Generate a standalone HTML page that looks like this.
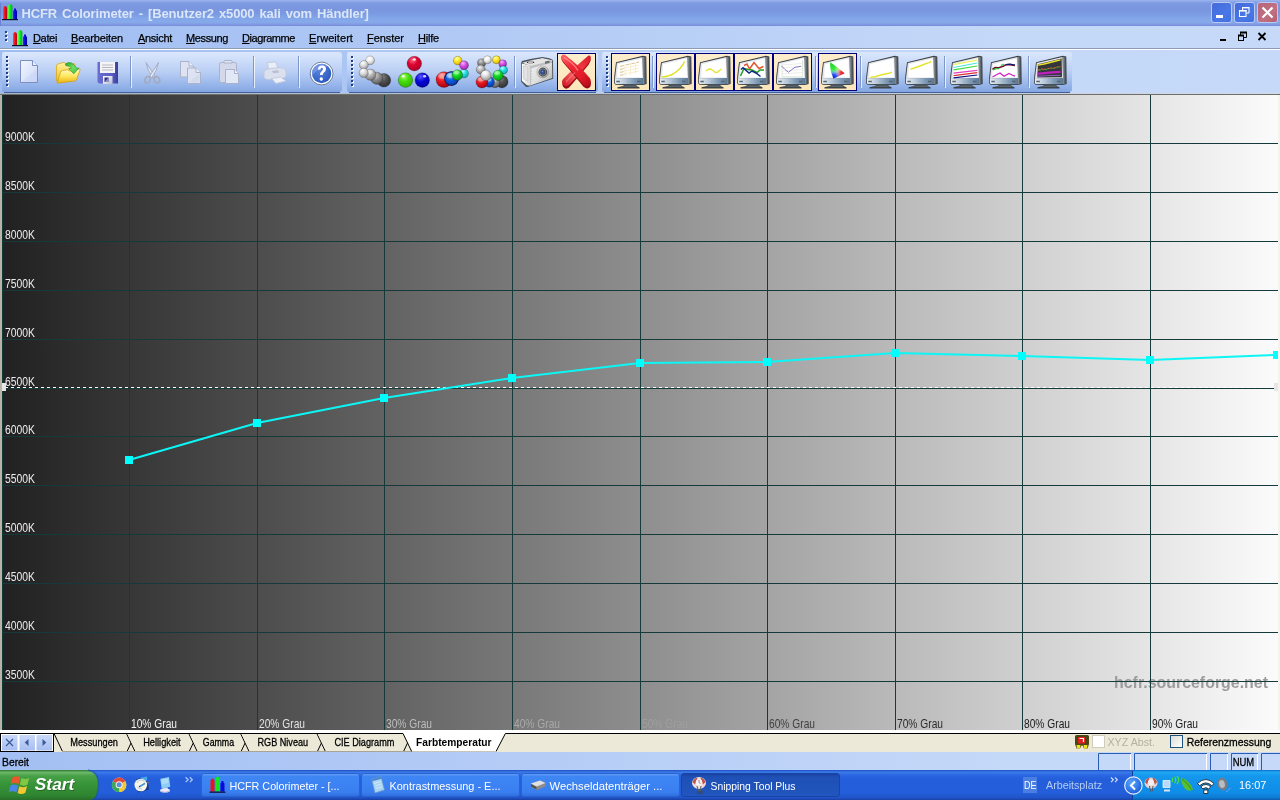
<!DOCTYPE html>
<html>
<head>
<meta charset="utf-8">
<title>HCFR Colorimeter</title>
<style>
html,body{margin:0;padding:0;}
body{width:1280px;height:800px;overflow:hidden;position:relative;background:#c3d7f7;font-family:"Liberation Sans",sans-serif;font-size:11px;color:#000;}
.a{position:absolute;}
svg.a,#title,#menu{will-change:transform;}
.t{position:absolute;white-space:nowrap;line-height:1;}
/* title bar */
#title{left:0;top:0;width:1280px;height:26px;background:linear-gradient(to bottom,#a0b7ed 0px,#8ca7e7 1.5px,#7c99e1 3.5px,#7996df 10px,#7b9be2 14px,#82a5e8 18px,#86aaea 22px,#829fe5 24px,#7a8fdc 25.5px,#7a8fdc 26px);}
#title .txt{left:21.5px;top:7px;font-size:13px;font-weight:bold;color:#dbe6f9;letter-spacing:0.1px;}
.tb{position:absolute;top:2px;width:21px;height:21px;border-radius:3px;box-sizing:border-box;border:1px solid #b9c9f3;}
/* menu */
#menu{left:0;top:26px;width:1280px;height:22px;background:linear-gradient(to right,#a0bdf2 0,#c4d8f8 1000px,#c6d9f8 1280px);}
#menu .t{top:7px;font-size:11px;-webkit-text-stroke:.25px #000;}
#menu u{text-decoration:underline;text-decoration-thickness:1px;text-underline-offset:0.5px;}
/* toolbars */
#dock{left:0;top:50px;width:1280px;height:43px;background:linear-gradient(to right,#a0bdf2 0,#c4d8f8 1000px,#c6d9f8 1280px);}
.bar{position:absolute;top:52px;height:40px;border-radius:2px 3px 3px 2px;background:linear-gradient(to bottom,#dbe7fc 0,#d1e0fa 15%,#b9cef4 50%,#94b3ea 85%,#85a5e1 100%);}
.sep{position:absolute;top:56px;width:1px;height:31px;background:#7f98cc;box-shadow:1px 1px 0 rgba(255,255,255,.75);}
.sel{position:absolute;top:53px;width:39px;height:38px;box-sizing:border-box;border:1px solid #00007a;background:linear-gradient(to bottom,#fdedcb,#fce6bb);}
.bar:after{content:"";position:absolute;left:2px;right:2px;bottom:-1px;height:1px;background:#42609a;}
/* chart */
#chart{left:2px;top:95px;width:1276px;height:635px;}
.yl{font-size:12.5px;fill:#ececec;font-family:"Liberation Sans",sans-serif;}
.xl{font-size:12.5px;font-family:"Liberation Sans",sans-serif;}
.wm{font-size:16px;font-weight:bold;fill:#9c9c9c;font-family:"Liberation Sans",sans-serif;}
.tt{font-size:11px;font-family:"Liberation Sans",sans-serif;}
.tk{stroke:#000;stroke-width:.3px;}
/* tabs */
#tabs{left:0;top:733px;width:1280px;height:19px;background:#ece9d8;}
#status{left:0;top:752px;width:1280px;height:18px;background:linear-gradient(to right,#a3bff3 0,#c4d8f8 1000px,#c6d9f8 1280px);}
.pane{position:absolute;top:755px;height:15px;box-sizing:border-box;border:1px solid #7d9ad6;border-right-color:#fff;border-bottom-color:#fff;}
/* taskbar */
#task{left:0;top:770px;width:1280px;height:30px;background:linear-gradient(to bottom,#1f52c7 0,#3a7bea 2px,#2a66e0 5px,#245edb 9px,#245edb 22px,#2055ca 27px,#1941a5 30px);}
.tbtn{position:absolute;top:773px;width:157px;height:24px;border-radius:3px;background:linear-gradient(to bottom,#5a95f5 0,#3c81f3 3px,#3b80f2 18px,#2f6fe0 24px);box-shadow:inset 1px 1px 0 #6ea4f8, inset -1px -1px 0 #2a5fc8;}
.tbtn.on{background:linear-gradient(to bottom,#173b9a 0,#1e52b7 3px,#1f54b9 20px,#2258bf 24px);box-shadow:inset 1px 1px 1px #12307e;}
.tbtn .t{left:28px;top:6px;color:#fff;font-size:11px;}
</style>
</head>
<body>
<!-- TITLE -->
<div id="title" class="a">
  <div class="a" style="left:0;top:3px;width:1px;height:23px;background:#6c7fd3"></div>
  <div class="t txt" id="ttxt" style="letter-spacing:-0.12px;word-spacing:1.5px;">HCFR Colorimeter - [Benutzer2 x5000 kali vom Händler]</div>
<svg class="a" style="left:2px;top:4px" width="18" height="18" viewBox="0 0 18 18"><defs><linearGradient id="ar" x1="0" x2="1"><stop offset="0" stop-color="#ff5040"/><stop offset=".45" stop-color="#f01018"/><stop offset="1" stop-color="#b00010"/></linearGradient><linearGradient id="ag" x1="0" x2="1"><stop offset="0" stop-color="#60ff60"/><stop offset=".45" stop-color="#10e820"/><stop offset="1" stop-color="#08a818"/></linearGradient><linearGradient id="ab" x1="0" x2="1"><stop offset="0" stop-color="#3030ff"/><stop offset=".45" stop-color="#0808e0"/><stop offset="1" stop-color="#0000a0"/></linearGradient></defs><path d="M1 15.500V4.500Q1 2 3 2Q5 2 5 4.500V15.500Z" fill="url(#ar)"/><path d="M6 15.500V2.500Q6 0 8.200 0Q10.400 0 10.400 2.500V15.500Z" fill="url(#ag)"/><path d="M11 15.500V7L12 6V4.500h2V6l1 1V15.500Z" fill="url(#ab)"/><rect x="0" y="15" width="16" height="1.200" fill="#101030"/></svg>
  <div class="tb" style="left:1211px;background:linear-gradient(135deg,#4568d8,#4a78e6 60%,#3f70e0)"><div class="a" style="left:4px;top:12px;width:7px;height:3px;background:#fff"></div></div>
  <div class="tb" style="left:1234px;background:linear-gradient(135deg,#4568d8,#4a78e6 60%,#3f70e0)"><svg class="a" style="left:0;top:0" width="19" height="19" viewBox="0 0 19 19"><path d="M7.5 7V4.500h6.500v5.500h-3" fill="none" stroke="#fff" stroke-width="1"/><path d="M7 4.700h7.500" stroke="#fff" stroke-width="1.400"/><rect x="4.500" y="7.500" width="6.500" height="6" fill="none" stroke="#fff" stroke-width="1"/><path d="M4 7.800h7.500" stroke="#fff" stroke-width="1.600"/></svg></div>
  <div class="tb" style="left:1257px;background:linear-gradient(135deg,#b8667c,#c07080 60%,#b4606f)"><svg class="a" style="left:0;top:0" width="19" height="19" viewBox="0 0 19 19"><path d="M4.5 4.5l10 10M14.5 4.5l-10 10" stroke="#fff" stroke-width="2.2" stroke-linecap="butt"/></svg></div>
</div>
<!-- MENU -->
<div id="menu" class="a">
<div class="a" style="left:5px;top:5px;width:2px;height:2px;background:#27408b;box-shadow:1px 1px 0 #fff,0 4px 0 #27408b,1px 5px 0 #fff,0 8px 0 #27408b,1px 9px 0 #fff"></div>
<svg class="a" style="left:12px;top:4px" width="18" height="18" viewBox="0 0 18 18"><defs><linearGradient id="br" x1="0" x2="1"><stop offset="0" stop-color="#ff5040"/><stop offset=".45" stop-color="#f01018"/><stop offset="1" stop-color="#b00010"/></linearGradient><linearGradient id="bg" x1="0" x2="1"><stop offset="0" stop-color="#60ff60"/><stop offset=".45" stop-color="#10e820"/><stop offset="1" stop-color="#08a818"/></linearGradient><linearGradient id="bb" x1="0" x2="1"><stop offset="0" stop-color="#3030ff"/><stop offset=".45" stop-color="#0808e0"/><stop offset="1" stop-color="#0000a0"/></linearGradient></defs><path d="M1 15.500V4.500Q1 2 3 2Q5 2 5 4.500V15.500Z" fill="url(#br)"/><path d="M6 15.500V2.500Q6 0 8.200 0Q10.400 0 10.400 2.500V15.500Z" fill="url(#bg)"/><path d="M11 15.500V7L12 6V4.500h2V6l1 1V15.500Z" fill="url(#bb)"/><rect x="0" y="15" width="16" height="1.200" fill="#101030"/></svg>
<div class="t" id="m0" style="letter-spacing:-0.341px;left:33px"><u>D</u>atei</div>
<div class="t" id="m1" style="letter-spacing:-0.122px;left:71px"><u>B</u>earbeiten</div>
<div class="t" id="m2" style="letter-spacing:-0.299px;left:138px"><u>A</u>nsicht</div>
<div class="t" id="m3" style="letter-spacing:-0.379px;left:186px"><u>M</u>essung</div>
<div class="t" id="m4" style="letter-spacing:-0.429px;left:242px"><u>D</u>iagramme</div>
<div class="t" id="m5" style="letter-spacing:0.066px;left:309px"><u>E</u>rweitert</div>
<div class="t" id="m6" style="letter-spacing:-0.045px;left:367px"><u>F</u>enster</div>
<div class="t" id="m7" style="letter-spacing:-0.203px;left:418px"><u>H</u>ilfe</div>
<div class="a" style="left:1220px;top:13px;width:6px;height:2px;background:#000"></div>
<svg class="a" style="left:1236px;top:5px" width="12" height="12" viewBox="0 0 12 12"><path d="M4.5 4V1.5h6v5H8" fill="none" stroke="#000"/><path d="M4 1.5h7" stroke="#000" stroke-width="2"/><rect x="2.5" y="4.5" width="5" height="5" fill="none" stroke="#000"/><path d="M2 4.5h6" stroke="#000" stroke-width="2"/></svg>
<svg class="a" style="left:1257px;top:6px" width="10" height="9" viewBox="0 0 10 9"><path d="M1.5 1l7 7M8.5 1l-7 7" stroke="#000" stroke-width="1.8"/></svg>
</div>
<div class="a" style="left:0;top:48px;width:1280px;height:1px;background:#8e9bb5"></div>
<div class="a" style="left:0;top:49px;width:1280px;height:1px;background:#ffffff"></div>
<!-- TOOLBARS -->
<div id="dock" class="a"></div>
<div class="bar" style="left:2px;width:340px"><svg class="a" style="left:4px;top:4px" width="3" height="32" viewBox="0 0 3 32"><rect x="1" y="1" width="2" height="2" fill="#fff"/><rect x="0" y="0" width="2" height="2" fill="#1c3e8c"/><rect x="1" y="5" width="2" height="2" fill="#fff"/><rect x="0" y="4" width="2" height="2" fill="#1c3e8c"/><rect x="1" y="9" width="2" height="2" fill="#fff"/><rect x="0" y="8" width="2" height="2" fill="#1c3e8c"/><rect x="1" y="13" width="2" height="2" fill="#fff"/><rect x="0" y="12" width="2" height="2" fill="#1c3e8c"/><rect x="1" y="17" width="2" height="2" fill="#fff"/><rect x="0" y="16" width="2" height="2" fill="#1c3e8c"/><rect x="1" y="21" width="2" height="2" fill="#fff"/><rect x="0" y="20" width="2" height="2" fill="#1c3e8c"/><rect x="1" y="25" width="2" height="2" fill="#fff"/><rect x="0" y="24" width="2" height="2" fill="#1c3e8c"/><rect x="1" y="29" width="2" height="2" fill="#fff"/><rect x="0" y="28" width="2" height="2" fill="#1c3e8c"/></svg></div>
<div class="bar" style="left:347px;width:251px"><svg class="a" style="left:4px;top:4px" width="3" height="32" viewBox="0 0 3 32"><rect x="1" y="1" width="2" height="2" fill="#fff"/><rect x="0" y="0" width="2" height="2" fill="#1c3e8c"/><rect x="1" y="5" width="2" height="2" fill="#fff"/><rect x="0" y="4" width="2" height="2" fill="#1c3e8c"/><rect x="1" y="9" width="2" height="2" fill="#fff"/><rect x="0" y="8" width="2" height="2" fill="#1c3e8c"/><rect x="1" y="13" width="2" height="2" fill="#fff"/><rect x="0" y="12" width="2" height="2" fill="#1c3e8c"/><rect x="1" y="17" width="2" height="2" fill="#fff"/><rect x="0" y="16" width="2" height="2" fill="#1c3e8c"/><rect x="1" y="21" width="2" height="2" fill="#fff"/><rect x="0" y="20" width="2" height="2" fill="#1c3e8c"/><rect x="1" y="25" width="2" height="2" fill="#fff"/><rect x="0" y="24" width="2" height="2" fill="#1c3e8c"/><rect x="1" y="29" width="2" height="2" fill="#fff"/><rect x="0" y="28" width="2" height="2" fill="#1c3e8c"/></svg></div>
<div class="bar" style="left:602px;width:470px"><svg class="a" style="left:4px;top:4px" width="3" height="32" viewBox="0 0 3 32"><rect x="1" y="1" width="2" height="2" fill="#fff"/><rect x="0" y="0" width="2" height="2" fill="#1c3e8c"/><rect x="1" y="5" width="2" height="2" fill="#fff"/><rect x="0" y="4" width="2" height="2" fill="#1c3e8c"/><rect x="1" y="9" width="2" height="2" fill="#fff"/><rect x="0" y="8" width="2" height="2" fill="#1c3e8c"/><rect x="1" y="13" width="2" height="2" fill="#fff"/><rect x="0" y="12" width="2" height="2" fill="#1c3e8c"/><rect x="1" y="17" width="2" height="2" fill="#fff"/><rect x="0" y="16" width="2" height="2" fill="#1c3e8c"/><rect x="1" y="21" width="2" height="2" fill="#fff"/><rect x="0" y="20" width="2" height="2" fill="#1c3e8c"/><rect x="1" y="25" width="2" height="2" fill="#fff"/><rect x="0" y="24" width="2" height="2" fill="#1c3e8c"/><rect x="1" y="29" width="2" height="2" fill="#fff"/><rect x="0" y="28" width="2" height="2" fill="#1c3e8c"/></svg></div>
<div class="sep" style="left:130px"></div>
<div class="sep" style="left:253px"></div>
<div class="sep" style="left:298px"></div>
<div class="sep" style="left:514px"></div>
<div class="sep" style="left:652px"></div>
<div class="sep" style="left:815px"></div>
<div class="sep" style="left:860px"></div>
<div class="sep" style="left:944px"></div>
<div class="sep" style="left:1028px"></div>
<div class="sel" style="left:557px"></div>
<div class="sel" style="left:611px"></div>
<div class="sel" style="left:656px"></div>
<div class="sel" style="left:695px"></div>
<div class="sel" style="left:734px"></div>
<div class="sel" style="left:773px"></div>
<div class="sel" style="left:818px"></div>
<!--ICONS-->
<svg class="a" style="left:0;top:50px" width="1280" height="44" viewBox="0 50 1280 44">
<defs>
<linearGradient id="docg" x1="0" y1="0" x2="1" y2="1"><stop offset="0" stop-color="#f4f7ff"/><stop offset=".5" stop-color="#dfe7fc"/><stop offset="1" stop-color="#c5d2f6"/></linearGradient>
<linearGradient id="fold1" x1="0" y1="0" x2="0" y2="1"><stop offset="0" stop-color="#fff3a0"/><stop offset="1" stop-color="#f0c020"/></linearGradient>
<linearGradient id="fold2" x1="0" y1="0" x2="0" y2="1"><stop offset="0" stop-color="#fffbd0"/><stop offset=".5" stop-color="#ffe860"/><stop offset="1" stop-color="#e8b010"/></linearGradient>
<linearGradient id="garr" x1="0" y1="0" x2="1" y2="1"><stop offset="0" stop-color="#30a030"/><stop offset=".5" stop-color="#70e060"/><stop offset="1" stop-color="#38b038"/></linearGradient>
<linearGradient id="flop" x1="0" y1="0" x2="1" y2="0"><stop offset="0" stop-color="#6a6ed2"/><stop offset=".7" stop-color="#595dc4"/><stop offset="1" stop-color="#3a3d98"/></linearGradient>
<linearGradient id="shut" x1="0" y1="0" x2="1" y2="1"><stop offset="0" stop-color="#ffffff"/><stop offset="1" stop-color="#b8bcd0"/></linearGradient>
</defs>
<!-- new doc -->
<path d="M20.5 60.5h12l5 5v17h-17z" fill="url(#docg)" stroke="#7d8fc2" stroke-width="1"/>
<path d="M32.5 60.5v5h5" fill="#eef2ff" stroke="#7d8fc2" stroke-width="1"/>
<path d="M21.5 82l15-12v12z" fill="#c9d5f7" opacity=".6"/>
<!-- open folder -->
<path d="M56.5 81V66q0-1.5 1.5-2l5-1.5q1.500-.3 2.200.7l1.300 1.800 7-1.500q1.500-.2 1.500 1.500v4z" fill="url(#fold1)" stroke="#d8a818" stroke-width=".8"/>
<path d="M57 83.200l3.500-11q.5-1.500 2-1.700l5-.8 2.500 1.300 9-2.200q1.500-.3 1 1.200l-3.500 9.500q-.5 1.300-2 1.600z" fill="url(#fold2)" stroke="#d8a010" stroke-width=".8"/>
<path d="M65.300 64Q71.500 59.800 76.700 68.200L79 68 73.800 73.800 68.600 68.600 71.500 68.400Q70 65.300 66 65.800Z" fill="url(#garr)" stroke="#2a902a" stroke-width=".6"/>
<!-- save -->
<path d="M97.500 62h20.500v21.500h-19l-1.500-1.500z" fill="url(#flop)"/>
<rect x="100" y="62" width="15" height="11" fill="#f4f4f8"/>
<path d="M102 65h11M102 67.500h11M102 70h11" stroke="#b0b0b8" stroke-width=".9"/>
<rect x="103" y="76" width="9.500" height="8" fill="url(#shut)"/>
<path d="M104.500 77.500h4v4.500h-4z" fill="#2a2d80"/>
<path d="M104.500 82l4-4.500v4.500z" fill="#8a8fd0"/>
<!-- cut (disabled) -->
<g fill="#e4e9f5" stroke="#a2abc2" stroke-width="1">
<path d="M146 62.500l2.500 8 4.500 7.500 1.500-2.500z"/>
<path d="M158.500 62.500l-2.500 8-4.500 7.500-1.500-2.500z"/>
<ellipse cx="147.600" cy="79.800" rx="2.600" ry="3.400" fill="none" stroke-width="1.700" transform="rotate(25 147.600 79.800)"/>
<ellipse cx="156.900" cy="79.800" rx="2.600" ry="3.400" fill="none" stroke-width="1.700" transform="rotate(-25 156.900 79.800)"/>
</g>
<!-- copy (disabled) -->
<g fill="#dde3f3" stroke="#aab3c9" stroke-width="1">
<path d="M180.500 61.500h8.500l4.500 4.500v11h-13z"/><path d="M189 61.500v4.500h4.500" fill="#eef1fa"/>
<path d="M187.500 68h8.500l4.500 4.500v11h-13z"/><path d="M196 68v4.500h4.500" fill="#eef1fa"/>
</g>
<path d="M188.500 82.500l11-9v9z" fill="#cdd5e8" opacity=".7"/>
<!-- paste (disabled) -->
<g stroke="#aab3c9" stroke-width="1">
<rect x="219.500" y="62.500" width="17" height="20" rx="2" fill="#d3d9ea"/>
<path d="M224 63v-1.500q0-1 1-1h6q1 0 1 1V63z" fill="#e4e8f4"/>
<path d="M225.500 69.500h9l4 4v10h-13z" fill="#e3e8f6"/><path d="M234.500 69.500v4h4" fill="#f0f3fb"/>
</g>
<!-- print (disabled) -->
<g stroke="#bcc4d8" stroke-width=".8">
<path d="M268.500 70l-1-7.500 8.500-.5 2 7z" fill="#e9edf8"/>
<path d="M264 72q0-2 3-3l12-1.500q5-.5 7 3v5q0 2-3 2.500l-14 1.500q-5 0-5-3z" fill="#dbe0ee"/>
<path d="M272 71l6-.8 1.200 2.300-6 .8z" fill="#b8bfd2" stroke="none"/>
<path d="M271.500 78.500l9-1.500 5.500 4-10 2.500z" fill="#eceff8"/>
</g>
<!-- help -->
<defs><radialGradient id="hlp" cx=".35" cy=".3" r=".8"><stop offset="0" stop-color="#5f86dc"/><stop offset="1" stop-color="#2556c0"/></radialGradient></defs>
<circle cx="321.600" cy="73.500" r="11.400" fill="#fff" stroke="#62718f" stroke-width=".9"/>
<circle cx="321.600" cy="73.500" r="9.700" fill="url(#hlp)"/>
<path d="M312.300 75.500A9.700 9.700 0 0 1 328 66.200Q318 67 312.300 75.500z" fill="#7d9de6" opacity=".75"/>
<path d="M317.800 69.500q.4-4 4.200-4 4 0 4 3.600 0 2.200-2 3.400-1.300.9-1.300 2.500h-2.800q0-2.500 1.800-3.800 1.300-1 1.300-2.100 0-1.300-1.200-1.300-1.300 0-1.500 1.900z" fill="#fff"/>
<circle cx="321.300" cy="79" r="1.700" fill="#fff"/>

<defs><radialGradient id="bW" cx=".4" cy=".3" r=".75" fx=".38" fy=".25"><stop offset="0" stop-color="#ffffff"/><stop offset=".45" stop-color="#f0f0f0"/><stop offset="1" stop-color="#a8a8a8"/></radialGradient><radialGradient id="bL" cx=".4" cy=".3" r=".75" fx=".38" fy=".25"><stop offset="0" stop-color="#ffffff"/><stop offset=".45" stop-color="#dcdcdc"/><stop offset="1" stop-color="#8c8c8c"/></radialGradient><radialGradient id="bM" cx=".4" cy=".3" r=".75" fx=".38" fy=".25"><stop offset="0" stop-color="#f4f4f4"/><stop offset=".45" stop-color="#b8b8b8"/><stop offset="1" stop-color="#6c6c6c"/></radialGradient><radialGradient id="bD" cx=".4" cy=".3" r=".75" fx=".38" fy=".25"><stop offset="0" stop-color="#d8d8d8"/><stop offset=".45" stop-color="#909090"/><stop offset="1" stop-color="#505050"/></radialGradient><radialGradient id="bK" cx=".4" cy=".3" r=".75" fx=".38" fy=".25"><stop offset="0" stop-color="#8a8a8a"/><stop offset=".45" stop-color="#505050"/><stop offset="1" stop-color="#2c2c2c"/></radialGradient><radialGradient id="bR" cx=".4" cy=".3" r=".75" fx=".38" fy=".25"><stop offset="0" stop-color="#ff8078"/><stop offset=".45" stop-color="#e81820"/><stop offset="1" stop-color="#a00010"/></radialGradient><radialGradient id="bRr" cx=".4" cy=".3" r=".75" fx=".38" fy=".25"><stop offset="0" stop-color="#ff6a80"/><stop offset=".45" stop-color="#dc0030"/><stop offset="1" stop-color="#a80028"/></radialGradient><radialGradient id="bG" cx=".4" cy=".3" r=".75" fx=".38" fy=".25"><stop offset="0" stop-color="#a0ff70"/><stop offset=".45" stop-color="#48dc08"/><stop offset="1" stop-color="#30b000"/></radialGradient><radialGradient id="bG2" cx=".4" cy=".3" r=".75" fx=".38" fy=".25"><stop offset="0" stop-color="#80ff80"/><stop offset=".45" stop-color="#10d820"/><stop offset="1" stop-color="#089018"/></radialGradient><radialGradient id="bB" cx=".4" cy=".3" r=".75" fx=".38" fy=".25"><stop offset="0" stop-color="#5858ff"/><stop offset=".45" stop-color="#0808d8"/><stop offset="1" stop-color="#0000a0"/></radialGradient><radialGradient id="bB2" cx=".4" cy=".3" r=".75" fx=".38" fy=".25"><stop offset="0" stop-color="#a0d0ff"/><stop offset=".45" stop-color="#1060e0"/><stop offset="1" stop-color="#0838a8"/></radialGradient><radialGradient id="bC" cx=".4" cy=".3" r=".75" fx=".38" fy=".25"><stop offset="0" stop-color="#c0ffff"/><stop offset=".45" stop-color="#20e0e0"/><stop offset="1" stop-color="#10a0a8"/></radialGradient><radialGradient id="bP" cx=".4" cy=".3" r=".75" fx=".38" fy=".25"><stop offset="0" stop-color="#ffb0ff"/><stop offset=".45" stop-color="#d050e0"/><stop offset="1" stop-color="#9020a8"/></radialGradient><radialGradient id="bY" cx=".4" cy=".3" r=".75" fx=".38" fy=".25"><stop offset="0" stop-color="#ffffb0"/><stop offset=".45" stop-color="#ffe820"/><stop offset="1" stop-color="#d0a800"/></radialGradient></defs>
<circle cx="383.9" cy="80.3" r="6.8" fill="url(#bK)" stroke="#000" stroke-opacity=".32" stroke-width=".7"/>
<circle cx="376.8" cy="78.3" r="6.1" fill="url(#bD)" stroke="#000" stroke-opacity=".32" stroke-width=".7"/>
<circle cx="370.4" cy="74.7" r="5.6" fill="url(#bM)" stroke="#000" stroke-opacity=".32" stroke-width=".7"/><ellipse cx="369.5" cy="72.0" rx="3.2" ry="2.1" fill="#fff" opacity=".35"/>
<circle cx="370.1" cy="60.4" r="4.4" fill="url(#bW)" stroke="#000" stroke-opacity=".32" stroke-width=".7"/>
<circle cx="363.9" cy="65.0" r="4.4" fill="url(#bL)" stroke="#000" stroke-opacity=".32" stroke-width=".7"/>
<circle cx="363.7" cy="72.9" r="4.6" fill="url(#bL)" stroke="#000" stroke-opacity=".32" stroke-width=".7"/>
<circle cx="414.3" cy="63.6" r="7.3" fill="url(#bRr)" stroke="#000" stroke-opacity=".32" stroke-width=".7"/>
<circle cx="405.5" cy="80.1" r="7.3" fill="url(#bG)" stroke="#000" stroke-opacity=".32" stroke-width=".7"/>
<circle cx="422.3" cy="80.1" r="7.3" fill="url(#bB)" stroke="#000" stroke-opacity=".32" stroke-width=".7"/>
<ellipse cx="414.3" cy="59.5" rx="1.6" ry="1.3" fill="#fff" opacity=".85"/>
<ellipse cx="403.3" cy="76.3" rx="1.6" ry="1.3" fill="#fff" opacity=".8"/>
<ellipse cx="424.6" cy="76.3" rx="1.6" ry="1.3" fill="#fff" opacity=".8"/>
<circle cx="443.9" cy="79.6" r="7.9" fill="url(#bR)" stroke="#000" stroke-opacity=".32" stroke-width=".7"/><ellipse cx="442.7" cy="75.9" rx="4.5" ry="2.9" fill="#fff" opacity=".35"/>
<circle cx="451.5" cy="78.6" r="7.4" fill="#10206a"/>
<circle cx="451.5" cy="78.6" r="6.6" fill="url(#bB2)" stroke="#000" stroke-opacity=".32" stroke-width=".7"/><ellipse cx="450.5" cy="75.5" rx="3.8" ry="2.4" fill="#fff" opacity=".35"/>
<circle cx="464.0" cy="73.5" r="4.5" fill="url(#bC)" stroke="#000" stroke-opacity=".32" stroke-width=".7"/>
<circle cx="457.3" cy="75.0" r="5.3" fill="url(#bG2)" stroke="#000" stroke-opacity=".32" stroke-width=".7"/><ellipse cx="456.5" cy="72.5" rx="3.1" ry="2.0" fill="#fff" opacity=".35"/>
<circle cx="457.7" cy="60.6" r="4.3" fill="url(#bY)" stroke="#000" stroke-opacity=".32" stroke-width=".7"/>
<circle cx="464.0" cy="65.3" r="4.5" fill="url(#bP)" stroke="#000" stroke-opacity=".32" stroke-width=".7"/>
<circle cx="501.9" cy="81.7" r="6.2" fill="url(#bK)" stroke="#000" stroke-opacity=".32" stroke-width=".7"/>
<circle cx="494.8" cy="82.5" r="5.2" fill="url(#bD)" stroke="#000" stroke-opacity=".32" stroke-width=".7"/><ellipse cx="494.0" cy="80.0" rx="3.0" ry="1.9" fill="#fff" opacity=".35"/>
<circle cx="489.4" cy="82.0" r="5.2" fill="url(#bB2)" stroke="#000" stroke-opacity=".32" stroke-width=".7"/><ellipse cx="488.6" cy="79.5" rx="3.0" ry="1.9" fill="#fff" opacity=".35"/>
<circle cx="482.0" cy="82.0" r="6.0" fill="url(#bR)" stroke="#000" stroke-opacity=".32" stroke-width=".7"/><ellipse cx="481.1" cy="79.2" rx="3.5" ry="2.2" fill="#fff" opacity=".35"/>
<circle cx="481.6" cy="62.9" r="4.1" fill="url(#bD)" stroke="#000" stroke-opacity=".32" stroke-width=".7"/>
<circle cx="480.8" cy="69.6" r="4.5" fill="url(#bM)" stroke="#000" stroke-opacity=".32" stroke-width=".7"/>
<circle cx="485.9" cy="75.4" r="5.3" fill="url(#bL)" stroke="#000" stroke-opacity=".32" stroke-width=".7"/><ellipse cx="485.1" cy="72.9" rx="3.1" ry="2.0" fill="#fff" opacity=".35"/>
<circle cx="487.4" cy="59.8" r="4.0" fill="url(#bW)" stroke="#000" stroke-opacity=".32" stroke-width=".7"/>
<circle cx="496.4" cy="59.8" r="4.0" fill="url(#bY)" stroke="#000" stroke-opacity=".32" stroke-width=".7"/>
<circle cx="502.7" cy="63.7" r="3.9" fill="url(#bP)" stroke="#000" stroke-opacity=".32" stroke-width=".7"/>
<circle cx="503.4" cy="70.0" r="4.1" fill="url(#bC)" stroke="#000" stroke-opacity=".32" stroke-width=".7"/>
<circle cx="498.0" cy="75.4" r="5.2" fill="url(#bG2)" stroke="#000" stroke-opacity=".32" stroke-width=".7"/><ellipse cx="497.2" cy="72.9" rx="3.0" ry="1.9" fill="#fff" opacity=".35"/>

<defs>
<linearGradient id="camF" x1="0" y1="0" x2="1" y2="1"><stop offset="0" stop-color="#f4f4f4"/><stop offset=".55" stop-color="#dedede"/><stop offset="1" stop-color="#acacac"/></linearGradient>
<linearGradient id="camL" x1="0" y1="0" x2="1" y2="0"><stop offset="0" stop-color="#ffffff"/><stop offset="1" stop-color="#d8d8d8"/></linearGradient>
<radialGradient id="camR" cx=".4" cy=".35" r=".7"><stop offset="0" stop-color="#ffffff"/><stop offset=".6" stop-color="#d0d0d0"/><stop offset="1" stop-color="#8c8c8c"/></radialGradient>
<linearGradient id="rx1" x1="0" y1="0" x2="1" y2="1"><stop offset="0" stop-color="#ff6a6a"/><stop offset=".35" stop-color="#f02834"/><stop offset=".7" stop-color="#e01c28"/><stop offset="1" stop-color="#b00c18"/></linearGradient>
<linearGradient id="rx2" x1="1" y1="0" x2="0" y2="1"><stop offset="0" stop-color="#d81824"/><stop offset=".4" stop-color="#f23a44"/><stop offset=".55" stop-color="#ff6868"/><stop offset="1" stop-color="#c81420"/></linearGradient>
</defs>
<!-- camera -->
<path d="M521 63.200l1-2.200 8.200-1.900 5.800-1.100 3.500-.4 2.800-.700 2.700.700 4.500.6 3 1.600.5 1.200.2 17.800-25.700 8.300-1.500-.2-5-5.300z" fill="#4c545c"/>
<path d="M521.800 63.600l8.500 2v20.200l-3.300-.6-5.200-4.500z" fill="url(#camL)"/>
<path d="M530.300 65.600l21.700-5.600.3 17.900-22 7.500z" fill="url(#camF)"/>
<path d="M530.300 65.600l21.700-5.600v2.800l-21.700 5.800z" fill="#b4b4b4" opacity=".8"/>
<path d="M522.300 62.700l8-2.300 6-1.200 3.500-.5 2.600-.6 2.400.6 4.400.7 2.600 1.300-21.500 5.400z" fill="#e4e4e4"/>
<ellipse cx="530.500" cy="62.200" rx="3.300" ry="1" fill="#d4d4d4" stroke="#5c5c5c" stroke-width=".5"/>
<circle cx="527.500" cy="62.300" r=".6" fill="#181818"/><circle cx="533.600" cy="62.300" r=".6" fill="#181818"/>
<path d="M545 61.400l4.600-.9v2.300l-4.600 1.100z" fill="#6c7074"/>
<path d="M523.300 65.800l4.500 1.100v14.800l-4.500-3.200z" fill="#e2e2e2" stroke="#c0c0c0" stroke-width=".6"/>
<path d="M531.600 68.500v13.500" stroke="#c0c0c0" stroke-width="1" stroke-dasharray="1 1.600"/>
<circle cx="542.800" cy="72" r="6" fill="url(#camR)" stroke="#9c9c9c" stroke-width=".5"/>
<circle cx="542.800" cy="72" r="4.400" fill="#484c50"/>
<circle cx="542.800" cy="72" r="3.400" fill="#787c84"/>
<circle cx="542.800" cy="72" r="2.500" fill="#3c4250"/>
<circle cx="542.800" cy="72" r="1.700" fill="#2458cc"/><circle cx="542.500" cy="71.400" r=".7" fill="#6c9cf0"/>
<!-- red X -->
<path d="M563.200 86.800q-1.800-2.600.3-5.300 9-10 24.800-24.300 1.800-1 2.300.5.800 3.500-2 7-10 12-19.500 22.800-3.300 2.600-5.900-.700z" fill="#9c0a16"/>
<path d="M562.600 84.300q-1.500-2.800.8-5.500 9-9.500 24.800-23 1.800-1 2.300.5.800 3.500-2 7-10 12-19.500 21.800-3.500 2.600-6.400-.800z" fill="url(#rx2)"/>
<path d="M590.300 86.800q1.600-3.800-1-7.200-8-10.500-24.300-24-2.300-1.300-3.300.4-1.200 3.800 1.800 7 9.500 10.500 20 23.800 4 3.400 6.800 0z" fill="#9c0a16"/>
<path d="M590.300 84.300q1.400-3.600-1-6.700-8-10-24.300-22.500-2.300-1.300-3.300.4-1.200 3.600 1.800 6.600 9.500 10.500 20 22.600 4 3.200 6.800-.4z" fill="url(#rx1)"/>
<path d="M564 57.500q9 5 14 13" stroke="#ffa0a0" stroke-width="1.500" fill="none" opacity=".6"/>
<path d="M566 82q5-6 9-9.500" stroke="#ff9090" stroke-width="1.300" fill="none" opacity=".5"/>

<defs>
<linearGradient id="monSide" x1="0" y1="0" x2="1" y2="0"><stop offset="0" stop-color="#8c949c"/><stop offset=".5" stop-color="#5c646c"/><stop offset="1" stop-color="#3c4044"/></linearGradient>
<linearGradient id="monChin" x1="0" y1="0" x2="1" y2="0"><stop offset="0" stop-color="#e8eef4"/><stop offset=".35" stop-color="#b8c8d8"/><stop offset=".7" stop-color="#7c98b4"/><stop offset="1" stop-color="#5c7894"/></linearGradient>
<linearGradient id="monBase" x1="0" y1="0" x2="0" y2="1"><stop offset="0" stop-color="#68747c"/><stop offset="1" stop-color="#30383c"/></linearGradient>
<linearGradient id="cieA" x1="0.1" y1="0" x2="0.3" y2="1"><stop offset="0" stop-color="#20e020"/><stop offset=".45" stop-color="#40f0c0"/><stop offset=".75" stop-color="#2060ff"/><stop offset="1" stop-color="#1010d0"/></linearGradient>
<linearGradient id="cieB" x1="0" y1=".5" x2="1" y2=".65"><stop offset="0" stop-color="#ffffff" stop-opacity="0"/><stop offset=".35" stop-color="#ffffff" stop-opacity=".75"/><stop offset=".6" stop-color="#ffb0a0" stop-opacity=".9"/><stop offset="1" stop-color="#f01010"/></linearGradient>
<radialGradient id="rgG"><stop offset="0" stop-color="#10d810"/><stop offset=".55" stop-color="#30e840" stop-opacity=".9"/><stop offset="1" stop-color="#60f080" stop-opacity="0"/></radialGradient>
<radialGradient id="rgB"><stop offset="0" stop-color="#1010d8"/><stop offset=".5" stop-color="#2040f0" stop-opacity=".9"/><stop offset="1" stop-color="#4080ff" stop-opacity="0"/></radialGradient>
<radialGradient id="rgR"><stop offset="0" stop-color="#e80808"/><stop offset=".45" stop-color="#f02030" stop-opacity=".9"/><stop offset="1" stop-color="#ff60a0" stop-opacity="0"/></radialGradient>
<radialGradient id="rgY"><stop offset="0" stop-color="#f0f060" stop-opacity=".8"/><stop offset="1" stop-color="#f0f060" stop-opacity="0"/></radialGradient>
<clipPath id="cieclip"><path d="M12.500 62.300L26.700 73.300 15.500 78.800Q11.200 70 12.500 62.300z"/></clipPath>
<g id="mon">
<path d="M5 62.200L31.800 55.800 35.300 56.600 35.600 84 32 85 25.500 85 25.500 86 28.500 87.300 28.500 88.500 6.500 88.500 6.500 87.300 12.500 86 12.500 85 4.500 84.700 3 83 3.300 76z" fill="#3a3e42"/>
<path d="M32 56.700l3 .6.200 26.200-3.200.8z" fill="url(#monSide)"/>
<path d="M5.800 63l25.700-6.100.5 21.400-28 .2.300-3z" fill="#e4e8ee"/>
<path d="M4 78.300l28-.2v6.100l-27.300-.3-.9-1z" fill="url(#monChin)"/>
<path d="M5.300 80.800h3.500v1.500h-3.500zM26 80.800h3.500v1.500h-3.500z" fill="#586470"/>
<path d="M16 81h1.800v1.200h-1.800z" fill="#9cb0c4"/>
<path d="M13.200 84.600h11.800v1.600h-11.800z" fill="#4c565e"/>
<path d="M7.300 87.900l5.700-1.900h12.200l2.600 1.900z" fill="url(#monBase)"/>
</g>
<path id="scr" d="M6.900 64.200l23.700-5.600.4 18.700-24.700.2z"/>
</defs>
<g transform="translate(611,0)"><use href="#mon"/><use href="#scr" fill="#ffffff"/><path d="M9 66.0l19-4" stroke="#f6e8c4" stroke-width=".8" fill="none"/><path d="M9 69.0l19-4" stroke="#f6e8c4" stroke-width=".8" fill="none"/><path d="M9 72.0l19-4" stroke="#f6e8c4" stroke-width=".8" fill="none"/><path d="M9 75.0l19-4" stroke="#f6e8c4" stroke-width=".8" fill="none"/><path d="M14.0 64.9v11" stroke="#f6e8c4" stroke-width=".8" fill="none"/><path d="M19.5 63.8v11" stroke="#f6e8c4" stroke-width=".8" fill="none"/><path d="M24.5 62.7v11" stroke="#f6e8c4" stroke-width=".8" fill="none"/><path d="M9 66.500l4-.9M15 65l3.500-.8M20.500 63.800l3-.7M25.500 62.700l2.500-.6M9 69.500l3.500-.8M9 72.500l3.500-.8M9 75.500l3.500-.8" stroke="#d8c8a0" stroke-width="1" fill="none"/></g>
<g transform="translate(656,0)"><use href="#mon"/><use href="#scr" fill="#ffffff"/><polyline points="6.0,77.0 11.0,76.3 16.0,74.5 20.0,72.0 24.0,68.5 27.0,64.5 28.5,61.5" fill="none" stroke="#e0e020" stroke-width="1.4" /></g>
<g transform="translate(695,0)"><use href="#mon"/><use href="#scr" fill="#ffffff"/><polyline points="11.0,71.0 13.0,69.5 15.5,69.0 18.0,70.5 20.5,72.5 22.5,72.3 24.5,70.5 26.5,69.0" fill="none" stroke="#e4e430" stroke-width="1.4" /></g>
<g transform="translate(734,0)"><use href="#mon"/><use href="#scr" fill="#ffffff"/><polyline points="10.0,65.5 13.0,64.0 15.5,69.0 20.0,62.5 25.0,68.5 29.5,66.5" fill="none" stroke="#e05830" stroke-width="1.5" /><polyline points="6.5,76.0 10.0,68.5 14.0,69.5 18.0,70.0 23.0,72.5 26.0,70.0 30.0,70.0" fill="none" stroke="#20a020" stroke-width="1.5" /><polyline points="7.0,69.5 9.0,67.8 15.0,73.0 18.0,71.0 22.0,73.0 26.5,76.5" fill="none" stroke="#102888" stroke-width="1.5" /></g>
<g transform="translate(773,0)"><use href="#mon"/><use href="#scr" fill="#ffffff"/><path d="M9 65.0l20-1.500" stroke="#e4e4e0" stroke-width=".7" fill="none"/><path d="M9 68.0l20-1.500" stroke="#e4e4e0" stroke-width=".7" fill="none"/><path d="M9 71.0l20-1.500" stroke="#e4e4e0" stroke-width=".7" fill="none"/><path d="M9 74.0l20-1.500" stroke="#e4e4e0" stroke-width=".7" fill="none"/><path d="M9 63.800v13h20.500v-17" stroke="#d0dcc8" stroke-width=".7" fill="none"/><polyline points="8.3,65.8 12.0,69.5 15.5,72.3 19.0,69.5 22.0,67.3 28.0,66.3" fill="none" stroke="#8878c8" stroke-width="1.0" /></g>
<g transform="translate(818,0)"><use href="#mon"/><use href="#scr" fill="#ffffff"/><g clip-path="url(#cieclip)"><rect x="10" y="60" width="20" height="20" fill="#c8f4f0"/><circle cx="13.500" cy="63.500" r="12" fill="url(#rgG)"/><circle cx="15.500" cy="78.800" r="8.500" fill="url(#rgB)"/><circle cx="26.700" cy="73.300" r="9" fill="url(#rgR)"/><circle cx="21" cy="68" r="4" fill="url(#rgY)"/></g></g>
<g transform="translate(863,0)"><use href="#mon"/><use href="#scr" fill="#ffffff"/><polyline points="7.5,77.2 12.0,76.8 17.0,75.3 22.0,74.0 26.0,73.2 29.0,72.3" fill="none" stroke="#e4e430" stroke-width="1.5" /></g>
<g transform="translate(902,0)"><use href="#mon"/><use href="#scr" fill="#ffffff"/><polyline points="8.5,69.2 13.0,67.8 18.0,66.0 23.0,64.0 27.0,62.6 29.0,61.5" fill="none" stroke="#e4e430" stroke-width="1.5" /></g>
<g transform="translate(947,0)"><use href="#mon"/><use href="#scr" fill="#ffffff"/><polyline points="6.6,64.7 30.3,60.2" fill="none" stroke="#f0f060" stroke-width="1.2" /><polyline points="6.6,67.5 30.3,63.0" fill="none" stroke="#40e8e0" stroke-width="1.2" /><polyline points="6.6,69.8 30.3,66.0" fill="none" stroke="#40d840" stroke-width="1.2" /><polyline points="6.6,73.2 30.3,70.4" fill="none" stroke="#e040c0" stroke-width="1.2" /><polyline points="6.6,75.6 30.3,72.7" fill="none" stroke="#e03030" stroke-width="1.2" /><polyline points="6.6,77.8 30.3,75.0" fill="none" stroke="#101080" stroke-width="1.2" /></g>
<g transform="translate(986,0)"><use href="#mon"/><use href="#scr" fill="#ffffff"/><polyline points="6.5,69.3 9.0,67.5 13.0,67.8 17.0,66.3 20.0,64.8 24.0,64.6 29.0,65.5" fill="none" stroke="#701028" stroke-width="1.6" /><polyline points="7.0,69.8 10.0,68.6 13.0,68.6" fill="none" stroke="#30c040" stroke-width="1.3" /><polyline points="15.0,65.5 18.0,64.2" fill="none" stroke="#50d070" stroke-width="1.6" /><polyline points="20.0,64.6 24.0,64.2 29.0,65.0" fill="none" stroke="#181878" stroke-width="1.2" /><polyline points="6.5,77.0 10.0,75.0 14.0,73.0 18.0,76.3 23.0,73.5 26.0,75.0 29.0,76.2" fill="none" stroke="#d020c0" stroke-width="1.3" /></g>
<g transform="translate(1031,0)"><use href="#mon"/><use href="#scr" fill="#34363a"/><polyline points="7.0,65.2 13.0,64.0 19.0,62.5 25.0,61.0 29.5,59.8" fill="none" stroke="#e8e030" stroke-width="1.3" /><polyline points="7.0,70.2 11.0,69.0 15.0,69.2 19.0,68.0 23.0,68.0 27.0,66.8 29.5,66.5" fill="none" stroke="#e07030" stroke-width="1.1" stroke-dasharray="2 1.2"/><polyline points="7.0,70.8 11.0,69.6 15.0,69.8 19.0,68.6 23.0,68.6 27.0,67.4 29.5,67.1" fill="none" stroke="#40c040" stroke-width="0.9" stroke-dasharray="1.2 2" stroke-dashoffset="1.2"/><polyline points="6.5,73.8 18.0,72.6 29.5,71.8" fill="none" stroke="#c020c0" stroke-width="2.2" /><polyline points="6.5,76.3 18.0,75.6 29.5,75.3" fill="none" stroke="#9060c0" stroke-width="1" /></g>

</svg>
<!--/ICONS-->
<div class="a" style="left:0;top:93px;width:1280px;height:1px;background:linear-gradient(to right,#a9b5c9,#d5dae2)"></div>
<div class="a" style="left:0;top:94px;width:1280px;height:1px;background:#6e6e6c"></div>
<!-- CHART -->
<div class="a" style="left:0;top:95px;width:2px;height:635px;background:#b9b5a6"></div>
<div class="a" style="left:1278px;top:95px;width:2px;height:635px;background:#f4f3ee"></div>
<svg id="chart" class="a" width="1276" height="635" viewBox="0 0 1276 635">
<!--CHART-->
<defs><linearGradient id="gg" x1="0" x2="1" y1="0" y2="0"><stop offset="0" stop-color="#212121"/><stop offset="1" stop-color="#fbfbfb"/></linearGradient></defs>
<rect x="0" y="0" width="1276" height="635" fill="url(#gg)"/>
<text x="1112" y="593" class="wm" textLength="154" lengthAdjust="spacingAndGlyphs">hcfr.sourceforge.net</text>
<rect x="0" y="0" width="1" height="635" fill="#143a3c"/>
<rect x="127" y="0" width="1" height="635" fill="#143a3c"/>
<rect x="255" y="0" width="1" height="635" fill="#143a3c"/>
<rect x="382" y="0" width="1" height="635" fill="#143a3c"/>
<rect x="510" y="0" width="1" height="635" fill="#143a3c"/>
<rect x="638" y="0" width="1" height="635" fill="#143a3c"/>
<rect x="765" y="0" width="1" height="635" fill="#143a3c"/>
<rect x="893" y="0" width="1" height="635" fill="#143a3c"/>
<rect x="1020" y="0" width="1" height="635" fill="#143a3c"/>
<rect x="1148" y="0" width="1" height="635" fill="#143a3c"/>
<rect x="0" y="48" width="1276" height="1" fill="#143a3c"/>
<rect x="0" y="97" width="1276" height="1" fill="#143a3c"/>
<rect x="0" y="146" width="1276" height="1" fill="#143a3c"/>
<rect x="0" y="195" width="1276" height="1" fill="#143a3c"/>
<rect x="0" y="244" width="1276" height="1" fill="#143a3c"/>
<rect x="0" y="293" width="1276" height="1" fill="#143a3c"/>
<rect x="0" y="341" width="1276" height="1" fill="#143a3c"/>
<rect x="0" y="390" width="1276" height="1" fill="#143a3c"/>
<rect x="0" y="439" width="1276" height="1" fill="#143a3c"/>
<rect x="0" y="488" width="1276" height="1" fill="#143a3c"/>
<rect x="0" y="537" width="1276" height="1" fill="#143a3c"/>
<rect x="0" y="586" width="1276" height="1" fill="#143a3c"/>
<text x="3" y="46" class="yl" textLength="30" lengthAdjust="spacingAndGlyphs">9000K</text>
<text x="3" y="95" class="yl" textLength="30" lengthAdjust="spacingAndGlyphs">8500K</text>
<text x="3" y="144" class="yl" textLength="30" lengthAdjust="spacingAndGlyphs">8000K</text>
<text x="3" y="193" class="yl" textLength="30" lengthAdjust="spacingAndGlyphs">7500K</text>
<text x="3" y="242" class="yl" textLength="30" lengthAdjust="spacingAndGlyphs">7000K</text>
<text x="3" y="291" class="yl" textLength="30" lengthAdjust="spacingAndGlyphs">6500K</text>
<text x="3" y="339" class="yl" textLength="30" lengthAdjust="spacingAndGlyphs">6000K</text>
<text x="3" y="388" class="yl" textLength="30" lengthAdjust="spacingAndGlyphs">5500K</text>
<text x="3" y="437" class="yl" textLength="30" lengthAdjust="spacingAndGlyphs">5000K</text>
<text x="3" y="486" class="yl" textLength="30" lengthAdjust="spacingAndGlyphs">4500K</text>
<text x="3" y="535" class="yl" textLength="30" lengthAdjust="spacingAndGlyphs">4000K</text>
<text x="3" y="584" class="yl" textLength="30" lengthAdjust="spacingAndGlyphs">3500K</text>
<text x="129" y="633" class="xl" fill="#f2f2f2" textLength="46" lengthAdjust="spacingAndGlyphs">10% Grau</text>
<text x="257" y="633" class="xl" fill="#e4e4e4" textLength="46" lengthAdjust="spacingAndGlyphs">20% Grau</text>
<text x="384" y="633" class="xl" fill="#bdbdbd" textLength="46" lengthAdjust="spacingAndGlyphs">30% Grau</text>
<text x="512" y="633" class="xl" fill="#a9a9a9" textLength="46" lengthAdjust="spacingAndGlyphs">40% Grau</text>
<text x="640" y="633" class="xl" fill="#9e9e9e" textLength="46" lengthAdjust="spacingAndGlyphs">50% Grau</text>
<text x="767" y="633" class="xl" fill="#404040" textLength="46" lengthAdjust="spacingAndGlyphs">60% Grau</text>
<text x="895" y="633" class="xl" fill="#2c2c2c" textLength="46" lengthAdjust="spacingAndGlyphs">70% Grau</text>
<text x="1022" y="633" class="xl" fill="#202020" textLength="46" lengthAdjust="spacingAndGlyphs">80% Grau</text>
<text x="1150" y="633" class="xl" fill="#1a1a1a" textLength="46" lengthAdjust="spacingAndGlyphs">90% Grau</text>
<line x1="3" y1="292.5" x2="1276" y2="292.5" stroke="#fff" stroke-width="1" stroke-dasharray="3 3"/>
<rect x="0" y="288" width="4" height="8" fill="#e6e6e6"/>
<rect x="1272" y="288" width="4" height="8" fill="#e6e6e6"/>
<polyline fill="none" stroke="#0cf6f6" stroke-width="2" points="127,365 255,328 382,303 510,283 638,268 765,267 893,258 1020,261 1148,265 1275,260"/>
<rect x="123" y="361" width="8" height="8" fill="#00ffff"/>
<rect x="251" y="324" width="8" height="8" fill="#00ffff"/>
<rect x="378" y="299" width="8" height="8" fill="#00ffff"/>
<rect x="506" y="279" width="8" height="8" fill="#00ffff"/>
<rect x="634" y="264" width="8" height="8" fill="#00ffff"/>
<rect x="761" y="263" width="8" height="8" fill="#00ffff"/>
<rect x="889" y="254" width="8" height="8" fill="#00ffff"/>
<rect x="1016" y="257" width="8" height="8" fill="#00ffff"/>
<rect x="1144" y="261" width="8" height="8" fill="#00ffff"/>
<rect x="1271" y="256" width="8" height="8" fill="#00ffff"/>
<!--/CHART-->
</svg>
<!-- TABS -->
<!--TABS-->
<svg class="a" style="left:0;top:730px" width="1280" height="22" viewBox="0 730 1280 22"><defs><linearGradient id="navg" x1="0" y1="0" x2="0" y2="1"><stop offset="0" stop-color="#c8d8f8"/><stop offset="1" stop-color="#a6bef0"/></linearGradient><linearGradient id="chkg" x1="0" y1="0" x2="1" y2="1"><stop offset="0" stop-color="#dcdcd4"/><stop offset="1" stop-color="#ffffff"/></linearGradient></defs><rect x="0" y="730" width="1280" height="3" fill="#ffffff"/>
<rect x="0" y="733" width="1280" height="19" fill="#ece9d8"/>
<path d="M54.0 733.500L62.5 751.500H127.0L135.5 733.500z" fill="#ece9d8" stroke="none"/>
<path d="M127.0 751.500L135.5 733.500" stroke="#000" stroke-width="1" fill="none"/>
<path d="M126.5 733.500L135.0 751.500H189.2L197.8 733.500z" fill="#ece9d8" stroke="none"/>
<path d="M189.2 751.500L197.8 733.500" stroke="#000" stroke-width="1" fill="none"/>
<path d="M188.8 733.500L197.2 751.500H241.1L249.6 733.500z" fill="#ece9d8" stroke="none"/>
<path d="M241.1 751.500L249.6 733.500" stroke="#000" stroke-width="1" fill="none"/>
<path d="M240.6 733.500L249.1 751.500H317.4L325.9 733.500z" fill="#ece9d8" stroke="none"/>
<path d="M317.4 751.500L325.9 733.500" stroke="#000" stroke-width="1" fill="none"/>
<path d="M316.9 733.500L325.4 751.500H403.5L412.0 733.500z" fill="#ece9d8" stroke="none"/>
<path d="M403.5 751.500L412.0 733.500" stroke="#000" stroke-width="1" fill="none"/>
<path d="M54.0 733.500L62.5 751.500" stroke="#000" stroke-width="1" fill="none"/>
<path d="M126.5 733.500L135.0 751.500" stroke="#000" stroke-width="1" fill="none"/>
<path d="M188.8 733.500L197.2 751.500" stroke="#000" stroke-width="1" fill="none"/>
<path d="M240.6 733.500L249.1 751.500" stroke="#000" stroke-width="1" fill="none"/>
<path d="M316.9 733.500L325.4 751.500" stroke="#000" stroke-width="1" fill="none"/>
<path d="M127.3 734L135.8 751H140.5L140.5 734z" fill="#ece9d8"/>
<path d="M189.6 734L198.1 751H202.8L202.8 734z" fill="#ece9d8"/>
<path d="M241.4 734L249.9 751H254.6L254.6 734z" fill="#ece9d8"/>
<path d="M317.7 734L326.2 751H330.9L330.9 734z" fill="#ece9d8"/>
<rect x="62" y="751" width="350" height="1" fill="#a8a594"/>
<path d="M403 733L411.700 751.500H496L505.400 733z" fill="#ffffff"/>
<path d="M403 733.500L411.700 751.500M505.400 733.500L496 751.500" stroke="#000" stroke-width="1" fill="none"/>
<rect x="412" y="751" width="84" height="1" fill="#c8c5b4"/>
<rect x="0" y="733" width="403" height="1" fill="#000"/>
<rect x="505.400" y="733" width="775" height="1" fill="#000"/>
<text x="70.3" y="746" class="tt tk" textLength="47.7" lengthAdjust="spacingAndGlyphs">Messungen</text>
<text x="143.2" y="746" class="tt tk" textLength="37.5" lengthAdjust="spacingAndGlyphs">Helligkeit</text>
<text x="202.8" y="746" class="tt tk" textLength="31.3" lengthAdjust="spacingAndGlyphs">Gamma</text>
<text x="257.5" y="746" class="tt tk" textLength="50.6" lengthAdjust="spacingAndGlyphs">RGB Niveau</text>
<text x="334.4" y="746" class="tt tk" textLength="60.0" lengthAdjust="spacingAndGlyphs">CIE Diagramm</text>
<text x="416" y="746" class="tt" font-weight="bold" textLength="75.500" lengthAdjust="spacingAndGlyphs">Farbtemperatur</text>
<rect x="0.500" y="733.500" width="53" height="18" fill="#ffffff" stroke="#000"/>
<rect x="2.0" y="735" width="15.500" height="15.500" fill="url(#navg)"/>
<rect x="19.5" y="735" width="15.500" height="15.500" fill="url(#navg)"/>
<rect x="36.5" y="735" width="15.500" height="15.500" fill="url(#navg)"/>
<path d="M6 739l7 7M13 739l-7 7" stroke="#3c5a9c" stroke-width="1.300" fill="none"/>
<path d="M28.500 739v7l-3.800-3.500z" fill="#3c5a9c"/>
<path d="M42.500 739v7l3.800-3.500z" fill="#3c5a9c"/>
<path d="M1075 736.500q0-1.500 1.500-1.500h11q1.500 0 1.500 1.500v7.500l-1.500 4.500h-3.500l-1.500-3h-1l-1.500 3h-3.500l-1.500-4.500z" fill="#4a4812"/>
<rect x="1078" y="737" width="7" height="6.500" fill="#e02020"/><path d="M1079.500 738.500h4v3.500" stroke="#fff" stroke-width="1.200" fill="none"/>
<path d="M1076.500 745h4l-.5 3.500h-3zM1083.500 745h4l-.5 3.500h-3z" fill="#f0e020"/>
<rect x="1092.500" y="735.500" width="12" height="12" fill="#ffffff" stroke="#d0cdbc"/>
<text x="1107.500" y="746" class="tt" fill="#b4b1a0" font-size="12.500" textLength="47.500" lengthAdjust="spacingAndGlyphs">XYZ Abst.</text>
<rect x="1170.500" y="735.500" width="12" height="12" fill="url(#chkg)" stroke="#1c5180"/>
<text x="1186.800" y="746" class="tt tk" font-size="12.500" textLength="84.500" lengthAdjust="spacingAndGlyphs">Referenzmessung</text></svg>
<!--/TABS-->
<!--TASK-->
<svg class="a" style="left:0;top:752px" width="1280" height="48" viewBox="0 752 1280 48"><defs>
<linearGradient id="stg" x1="0" y1="0" x2="1" y2="0"><stop offset="0" stop-color="#a3bff3"/><stop offset=".78" stop-color="#c4d8f8"/><stop offset="1" stop-color="#c6d9f8"/></linearGradient>
<linearGradient id="tkg" x1="0" y1="0" x2="0" y2="1"><stop offset="0" stop-color="#1f4fc0"/><stop offset=".07" stop-color="#3a7bea"/><stop offset=".17" stop-color="#2b67e2"/><stop offset=".3" stop-color="#245edb"/><stop offset=".75" stop-color="#245edb"/><stop offset=".92" stop-color="#2055ca"/><stop offset="1" stop-color="#1941a5"/></linearGradient>
<linearGradient id="trg" x1="0" y1="0" x2="0" y2="1"><stop offset="0" stop-color="#0c68c8"/><stop offset=".07" stop-color="#1fa8f4"/><stop offset=".2" stop-color="#1497ec"/><stop offset=".75" stop-color="#0f8de8"/><stop offset=".92" stop-color="#0e7ad2"/><stop offset="1" stop-color="#0a5cb0"/></linearGradient>
<linearGradient id="sbg" x1="0" y1="0" x2="0" y2="1"><stop offset="0" stop-color="#2f7a30"/><stop offset=".08" stop-color="#6cb86a"/><stop offset=".2" stop-color="#47a047"/><stop offset=".5" stop-color="#369337"/><stop offset=".85" stop-color="#2f8532"/><stop offset="1" stop-color="#266e28"/></linearGradient>
<linearGradient id="btg" x1="0" y1="0" x2="0" y2="1"><stop offset="0" stop-color="#6aa2f8"/><stop offset=".12" stop-color="#3f86f5"/><stop offset=".8" stop-color="#3a7ff0"/><stop offset="1" stop-color="#2e6ede"/></linearGradient>
<linearGradient id="bpg" x1="0" y1="0" x2="0" y2="1"><stop offset="0" stop-color="#193f9c"/><stop offset=".15" stop-color="#1e50b6"/><stop offset="1" stop-color="#2156be"/></linearGradient>
<radialGradient id="rbt" cx=".4" cy=".35" r=".7"><stop offset="0" stop-color="#5aa8ff"/><stop offset="1" stop-color="#1858d8"/></radialGradient>
</defs>
<rect x="0" y="752" width="1280" height="18" fill="url(#stg)"/>
<text x="2" y="765.500" class="tt tk" textLength="27" lengthAdjust="spacingAndGlyphs">Bereit</text>
<path d="M1098.5 770V753.500H1131" stroke="#2a5cb4" fill="none"/>
<path d="M1130.5 754V770" stroke="#ffffff" fill="none"/>
<path d="M1134.5 770V753.500H1207" stroke="#2a5cb4" fill="none"/>
<path d="M1206.5 754V770" stroke="#ffffff" fill="none"/>
<path d="M1210.5 770V753.500H1228" stroke="#2a5cb4" fill="none"/>
<path d="M1227.5 754V770" stroke="#ffffff" fill="none"/>
<path d="M1231.5 770V753.500H1258" stroke="#2a5cb4" fill="none"/>
<path d="M1257.5 754V770" stroke="#ffffff" fill="none"/>
<path d="M1261.5 770V753.500H1281" stroke="#2a5cb4" fill="none"/>
<path d="M1280.5 754V770" stroke="#ffffff" fill="none"/>
<text x="1232.700" y="765.500" class="tt tk" textLength="21.500" lengthAdjust="spacingAndGlyphs">NUM</text>
<rect x="0" y="770" width="1280" height="30" fill="url(#tkg)"/>
<rect x="1133" y="770" width="147" height="30" fill="url(#trg)"/>
<rect x="1132" y="771" width="1" height="29" fill="#123c98"/>
<path d="M0 770H88Q98.500 772 98.500 785T92 800H0z" fill="url(#sbg)"/>
<path d="M88 770Q99 772 98.500 785T92 800" fill="none" stroke="#1c4cae" stroke-width="1.500" opacity=".6"/>
<path d="M12.600 777.300q3.600-2.300 7.600.2l-1.700 6.700q-4.200-2.400-7.700-.2z" fill="#e8582a"/>
<path d="M21.500 777.900q3.800 2.200 7.800-.2l-1.800 6.700q-3.900 2.400-7.700.2z" fill="#80c844"/>
<path d="M10.500 785.600q3.500-2.200 7.600.2l-1.700 6.700q-4.200-2.400-7.700-.2z" fill="#4a86e8"/>
<path d="M19.300 786.300q3.800 2.200 7.800-.2l-1.800 6.700q-3.900 2.400-7.700.2z" fill="#f4c832"/>
<text x="35.500" y="791.200" font-family="Liberation Sans,sans-serif" font-size="17" font-weight="bold" font-style="italic" fill="#1c4c1c" opacity=".6" textLength="39.500" lengthAdjust="spacingAndGlyphs">Start</text>
<text x="34.800" y="790.300" font-family="Liberation Sans,sans-serif" font-size="17" font-weight="bold" font-style="italic" fill="#ffffff" textLength="39.500" lengthAdjust="spacingAndGlyphs">Start</text>
<circle cx="119.100" cy="784.800" r="7.200" fill="#e8e8e8"/>
<path d="M119.100 784.800L112.860 781.200A7.200 7.200 0 0 1 125.340 781.200z" fill="#dc4a3c"/>
<path d="M119.100 784.800L125.340 781.200A7.200 7.200 0 0 1 119.100 792z" fill="#f0c838"/>
<path d="M119.100 784.800L119.100 792A7.200 7.200 0 0 1 112.860 781.200z" fill="#38a858"/>
<circle cx="119.100" cy="784.800" r="3.500" fill="#f0f0f0"/><circle cx="119.100" cy="784.800" r="2.500" fill="#5a8ee0"/>
<path d="M136 779.500l11-2.500 2 12.500-11 3z" fill="#1a3a8c"/>
<path d="M141 777.500l6-1 .5 4-6 1z" fill="#48a8ec"/>
<circle cx="140.800" cy="785" r="6.300" fill="#f6f6ea"/>
<path d="M137 783q1-3 4-3 3 0 3.500 2.500M137 786.500q1.500 3 5 2.500" stroke="#b8ccdc" stroke-width="1" fill="none"/>
<path d="M139.500 785.800l5-3 1 1.200-5 3z" fill="#3a90d8"/><path d="M139.500 785.800l1 1.200-1.800.3z" fill="#101010"/>
<path d="M146.500 781.500l2.500.8-1.200 1.500z" fill="#c86830"/>
<path d="M160.300 778.800l8.700-1.800 1.200 9.800-8.600 2z" fill="#8cccf6"/><path d="M161.300 779.600l6.800-1.400 .5 4.500-7 1.800z" fill="#b4e0fa" opacity=".8"/>
<path d="M163 788.500l4.500-1 .8 2.500h-5.500z" fill="#d8e0f4"/>
<ellipse cx="165" cy="790.500" rx="5" ry="2" fill="#eceaf8"/><path d="M160.500 791q4.500 2.800 9 0" stroke="#a8a8c8" stroke-width=".7" fill="none"/>
<path d="M185.600 777.300l2.500 2.400-2.500 2.400M189.800 777.300l2.500 2.400-2.500 2.400" stroke="#a8c8ff" stroke-width="1.300" fill="none"/>
<rect x="201.5" y="773.500" width="158" height="23" rx="2.500" fill="url(#btg)" stroke="#2c62cc" stroke-width="1"/>
<text x="229.5" y="789.800" class="tt" fill="#fff" textLength="110.0" lengthAdjust="spacingAndGlyphs">HCFR Colorimeter - [...</text>
<rect x="361.5" y="773.500" width="158" height="23" rx="2.500" fill="url(#btg)" stroke="#2c62cc" stroke-width="1"/>
<text x="389.5" y="789.800" class="tt" fill="#fff" textLength="111.0" lengthAdjust="spacingAndGlyphs">Kontrastmessung - E...</text>
<rect x="521.5" y="773.500" width="158" height="23" rx="2.500" fill="url(#btg)" stroke="#2c62cc" stroke-width="1"/>
<text x="549.5" y="789.800" class="tt" fill="#fff" textLength="113.0" lengthAdjust="spacingAndGlyphs">Wechseldatenträger ...</text>
<rect x="681.5" y="773.500" width="158" height="23" rx="2.500" fill="url(#bpg)" stroke="#1a44a4" stroke-width="1"/>
<text x="710.5" y="789.800" class="tt" fill="#fff" textLength="85.0" lengthAdjust="spacingAndGlyphs">Snipping Tool Plus</text>
<g transform="translate(209.500,776.500)"><path d="M1 15V4.500Q1 2 3 2Q5 2 5 4.500V15Z" fill="#f01018"/><path d="M6 15V2.500Q6 0 8.200 0Q10.400 0 10.400 2.500V15Z" fill="#10e820"/><path d="M11 15V7L12 6V4.500h2V6l1 1V15Z" fill="#0808e0"/><rect x="0" y="15" width="16" height="1.300" fill="#101030"/></g>
<path d="M371.500 779l9.500-2.500 3.500 13.500-9.500 3z" fill="#a8d4f4" stroke="#6890c0" stroke-width=".7"/><path d="M371.500 779l9.500-2.500 .6 2.200-9.500 2.500z" fill="#4c84d0"/><path d="M374 783.500l7-2M374.800 786l7-2M375.600 788.500l7-2" stroke="#d8ecfc" stroke-width=".8"/>
<path d="M531 783.500l9-3 5.500 2.500v3.500l-9 3.500-5.500-3z" fill="#8c8c8c"/><path d="M531 783.500l9-3 5.500 2.500-9 3.500z" fill="#e0e0e0"/><path d="M531 786.500l5.500 3v-2.500l-5.500-3z" fill="#505050"/>
<ellipse cx="699" cy="783" rx="7" ry="6" fill="#ecdcdc"/><path d="M692.500 782q1.500-4 5-4.500l-1 3-1.500 4zM705.500 782q-1.500-4-5-4.500l1 3 1.500 4z" fill="#c0544c"/><circle cx="699" cy="782.500" r="3.200" fill="#f6f2f2"/><path d="M699 780v2.500l1.500 1" stroke="#805050" stroke-width=".7" fill="none"/><path d="M697 786l1.500 6M701 786l-1 6" stroke="#606060" stroke-width="1"/><circle cx="698.500" cy="792.500" r="1.300" fill="none" stroke="#404040" stroke-width=".7"/><circle cx="701.500" cy="792.500" r="1.300" fill="none" stroke="#404040" stroke-width=".7"/>
<rect x="1023" y="777" width="14" height="16" fill="#4a7ee2"/>
<text x="1024" y="789" class="tt" fill="#fff" textLength="12.500" lengthAdjust="spacingAndGlyphs">DE</text>
<text x="1046" y="788.800" class="tt" fill="#b4ccf4" textLength="56" lengthAdjust="spacingAndGlyphs">Arbeitsplatz</text>
<path d="M1111 777.500l2.300 2.300-2.300 2.300M1115 777.500l2.300 2.300-2.300 2.300" stroke="#cfe0ff" stroke-width="1.200" fill="none"/>
<circle cx="1133.400" cy="785.500" r="8.700" fill="url(#rbt)" stroke="#e8f0ff" stroke-width="1.200"/>
<path d="M1135 781.500l-4 4 4 4" stroke="#fff" stroke-width="2" fill="none"/>
<ellipse cx="1151" cy="783" rx="6.500" ry="5.500" fill="#e4d4d4"/><path d="M1145 782q1.500-4 4.500-4.500l-1 3-1.500 4zM1157 782q-1.500-4-4.500-4.500l1 3 1.500 4z" fill="#b8544c"/><circle cx="1151" cy="782.500" r="2.900" fill="#f4f0f0"/><path d="M1149.500 786l1 5.500M1153 786l-.8 5.500" stroke="#505868" stroke-width="1"/>
<path d="M1163 780.500h7v7h-7z" fill="#b8d8f8" stroke="#e8f4ff" stroke-width=".8"/><path d="M1164 789.500h6v2h-6z" fill="#d8e4f4"/><path d="M1172 782q1.500-2 0-4M1174.500 783q2.500-3 0-6M1177 784q3.500-4 0-8" stroke="#40e040" stroke-width="1.300" fill="none"/>
<path d="M1181 778q8 1 12 11.500-3 2-6.500.5-5-4-5.500-12z" fill="#58c030"/><path d="M1182 779q6 4 9.500 10.500" stroke="#2c8018" stroke-width=".8" fill="none"/>
<path d="M1197.500 783.500q8.300-8 16.600 0l-2.200 2.200q-6.100-5.600-12.200 0z" fill="#fff" stroke="#101010" stroke-width=".8"/><path d="M1200.800 786.800q5-4.600 10 0l-2.100 2.100q-2.900-2.500-5.800 0z" fill="#fff" stroke="#101010" stroke-width=".8"/><path d="M1203.800 790h4v3.500h-4z" fill="#fff" stroke="#101010" stroke-width=".8"/>
<ellipse cx="1222.500" cy="784" rx="5" ry="6.500" fill="#787c84" transform="rotate(-15 1222.500 784)"/><ellipse cx="1222" cy="784" rx="2.800" ry="4" fill="#b8bcc4" transform="rotate(-15 1222 784)"/><path d="M1226 792q3-1.500 4.500-4.500" stroke="#6c9cf0" stroke-width="1" fill="none"/>
<text x="1239" y="788.800" class="tt" fill="#fff" textLength="27.300" lengthAdjust="spacingAndGlyphs">16:07</text></svg>
<!--/TASK-->
</body>
</html>
